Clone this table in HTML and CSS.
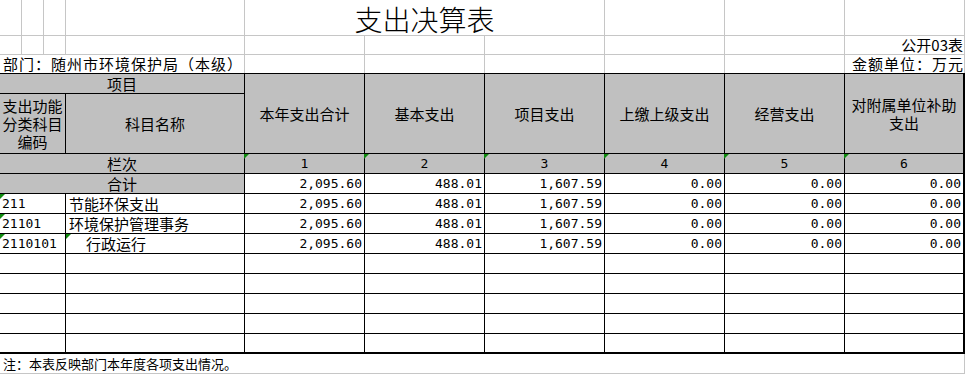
FILE: index.html
```html
<!DOCTYPE html>
<html lang="zh-CN">
<head>
    <meta charset="UTF-8">
    <meta name="viewport" content="width=device-width, initial-scale=1.0">
    <title>支出决算表</title>
    <link rel="stylesheet" href="styles.css">
</head>
<body>

    <div class="sheet">
        <!-- Cabeçalho da planilha (linhas de grade cinza) -->
        <div class="sheet-head">
            <div class="g"></div>
            <div class="g"></div>
            <div class="g"></div>
            <div class="g"></div>
            <div class="g title">支出决算表</div>
            <div class="g"></div>
            <div class="g"></div>
            <div class="g"></div>

            <div class="g"></div>
            <div class="g"></div>
            <div class="g"></div>
            <div class="g"></div>
            <div class="g"></div>
            <div class="g"></div>
            <div class="g"></div>
            <div class="g"></div>
            <div class="g"></div>
            <div class="g right">公开03表</div>

            <div class="g dept">部门：随州市环境保护局（本级）</div>
            <div class="g last-row"></div>
            <div class="g last-row"></div>
            <div class="g last-row"></div>
            <div class="g last-row"></div>
            <div class="g last-row"></div>
            <div class="g right last-row unit">金额单位：万元</div>
        </div>

        <!-- Tabela principal -->
        <div class="report">
            <div class="c hd span2">项目</div>
            <div class="c hd tall">本年支出合计</div>
            <div class="c hd tall">基本支出</div>
            <div class="c hd tall">项目支出</div>
            <div class="c hd tall">上缴上级支出</div>
            <div class="c hd tall">经营支出</div>
            <div class="c hd tall end wrap">对附属单位补助支出</div>
            <div class="c hd wrap">支出功能分类科目编码</div>
            <div class="c hd">科目名称</div>

            <div class="c hd span2">栏次</div>
            <div class="c hd num-c flag">1</div>
            <div class="c hd num-c flag">2</div>
            <div class="c hd num-c flag">3</div>
            <div class="c hd num-c flag">4</div>
            <div class="c hd num-c flag">5</div>
            <div class="c hd num-c flag end">6</div>

            <div class="c hd span2">合计</div>
            <div class="c num">2,095.60</div>
            <div class="c num">488.01</div>
            <div class="c num">1,607.59</div>
            <div class="c num">0.00</div>
            <div class="c num">0.00</div>
            <div class="c num end">0.00</div>

            <div class="c code flag">211</div>
            <div class="c name">节能环保支出</div>
            <div class="c num">2,095.60</div>
            <div class="c num">488.01</div>
            <div class="c num">1,607.59</div>
            <div class="c num">0.00</div>
            <div class="c num">0.00</div>
            <div class="c num end">0.00</div>

            <div class="c code flag">21101</div>
            <div class="c name">环境保护管理事务</div>
            <div class="c num">2,095.60</div>
            <div class="c num">488.01</div>
            <div class="c num">1,607.59</div>
            <div class="c num">0.00</div>
            <div class="c num">0.00</div>
            <div class="c num end">0.00</div>

            <div class="c code flag">2110101</div>
            <div class="c name sub flag">行政运行</div>
            <div class="c num">2,095.60</div>
            <div class="c num">488.01</div>
            <div class="c num">1,607.59</div>
            <div class="c num">0.00</div>
            <div class="c num">0.00</div>
            <div class="c num end">0.00</div>

            <div class="c"></div><div class="c"></div><div class="c"></div><div class="c"></div>
            <div class="c"></div><div class="c"></div><div class="c"></div><div class="c end"></div>

            <div class="c"></div><div class="c"></div><div class="c"></div><div class="c"></div>
            <div class="c"></div><div class="c"></div><div class="c"></div><div class="c end"></div>

            <div class="c"></div><div class="c"></div><div class="c"></div><div class="c"></div>
            <div class="c"></div><div class="c"></div><div class="c"></div><div class="c end"></div>

            <div class="c"></div><div class="c"></div><div class="c"></div><div class="c"></div>
            <div class="c"></div><div class="c"></div><div class="c"></div><div class="c end"></div>

            <div class="c bottom"></div><div class="c bottom"></div><div class="c bottom"></div><div class="c bottom"></div>
            <div class="c bottom"></div><div class="c bottom"></div><div class="c bottom"></div><div class="c bottom end"></div>
        </div>

        <div class="note">注：本表反映部门本年度各项支出情况。</div>
    </div>

</body>
</html>
```

FILE: styles.css
```css
body {
    margin: 0;
    background-color: #fff;
    font-family: "Noto Sans CJK SC", "Noto Sans", sans-serif;
    font-size: 15px;
    color: #000;
    text-spacing-trim: space-all;
}
.sheet {
    width: 965px;
}

/* linhas de grade cinza */
.sheet-head {
    display: grid;
    grid-template-columns: 22px 22px 22px 179px repeat(6, 120px);
    grid-template-rows: 36px 19px 18px;
}
.g {
    box-sizing: border-box;
    border-right: 1px solid #c6c6c6;
    border-bottom: 1px solid #c6c6c6;
    display: flex;
    align-items: flex-end;
    white-space: nowrap;
    line-height: 18px;
}
.g.last-row {
    border-bottom: none;
}
.title {
    grid-column: span 3;
    justify-content: center;
    font-size: 28px;
    line-height: 30px;
    font-weight: 300;
    padding-bottom: 1px;
}
.right {
    justify-content: flex-end;
    padding-right: 1px;
}
.dept {
    grid-column: span 4;
    border-bottom: none;
    padding-left: 3px;
    letter-spacing: 1px;
}
.unit {
    letter-spacing: 1px;
    padding-right: 0;
}

/* tabela */
.report {
    display: grid;
    grid-template-columns: 66px 179px repeat(6, 120px);
    grid-template-rows: 20px 60px 20px 20px repeat(8, 20px);
    border-top: 1px solid #000;
}
.c {
    box-sizing: border-box;
    border-right: 1px solid #000;
    border-bottom: 1px solid #000;
    display: flex;
    align-items: center;
    white-space: nowrap;
    line-height: 18px;
    background-color: #fff;
}
.c.end {
    border-right: 2px solid #000;
}
.c.bottom {
    border-bottom: 2px solid #000;
}
.hd {
    background-color: #c0c0c0;
    justify-content: center;
    text-align: center;
}
.span2 {
    grid-column: span 2;
}
.tall {
    grid-row: span 2;
}
.wrap {
    white-space: normal;
    padding: 0 2px;
}
.num, .num-c, .code {
    font-family: "DejaVu Sans Mono", "Liberation Mono", monospace;
    font-size: 13px;
}
.num {
    justify-content: flex-end;
    padding-right: 2px;
}
.code {
    padding-left: 2px;
}
.name {
    padding-left: 3px;
}
.name.sub {
    padding-left: 20px;
}
.flag {
    position: relative;
}
.flag::before {
    content: "";
    position: absolute;
    left: 0;
    top: 0;
    border-top: 5px solid #0f8a0f;
    border-right: 5px solid transparent;
}
.hd.flag::before {
    left: -1px;
}
.note {
    box-sizing: border-box;
    height: 20px;
    border-right: 1px solid #c6c6c6;
    border-bottom: 1px solid #c6c6c6;
    padding-left: 3px;
    font-size: 13px;
    line-height: 19px;
}
```
